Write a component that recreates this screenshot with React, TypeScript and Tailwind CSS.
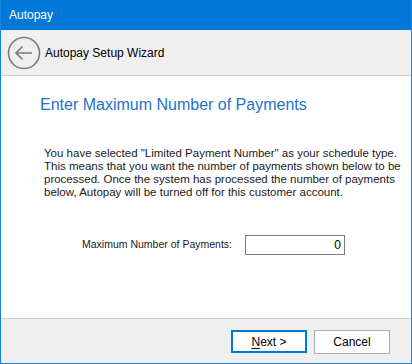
export default function App() {
    return (
        <div className="w-[412px] h-[364px] flex flex-col border-x border-b border-[#1883d7] bg-white font-['Liberation_Sans',sans-serif] text-black overflow-hidden">
            {/* TITLE BAR */}
            <div className="h-[30px] -mx-px bg-[#0078d7] flex items-center pl-[9px] text-[12px] text-white">
                Autopay
            </div>

            {/* WIZARD HEADER */}
            <div className="h-[46px] bg-[#efefef] border-b border-[#cccccc] flex items-center pl-[6px]">
                <svg width="34" height="34" viewBox="0 0 34 34" className="shrink-0">
                    <circle cx="17" cy="17" r="15.5" fill="none" stroke="#7a7a7a" strokeWidth="1.6" />
                    <path d="M9 17 H25 M15.5 10.5 L9 17 L15.5 23.5" fill="none" stroke="#7a7a7a" strokeWidth="1.6" />
                </svg>
                <span className="ml-[4px] text-[12px] leading-none">Autopay Setup Wizard</span>
            </div>

            {/* CONTENT */}
            <div className="flex-1 pl-[39px] pt-[18px]">
                <h2 className="text-[16px] leading-[22px] text-[#1e73c8]">
                    Enter Maximum Number of Payments
                </h2>

                <p className="mt-[31px] ml-[4px] whitespace-nowrap text-[11.5px] leading-[13px] text-[#1a1a1a]">
                    You have selected "Limited Payment Number" as your schedule type.<br />
                    This means that you want the number of payments shown below to be<br />
                    processed. Once the system has processed the number of payments<br />
                    below, Autopay will be turned off for this customer account.
                </p>

                <div className="mt-[36px] flex items-center">
                    <span className="w-[192px] text-right text-[10.5px] text-[#1a1a1a]">
                        Maximum Number of Payments:
                    </span>
                    <div className="ml-[13px] w-[100px] h-[20px] border border-[#7a7a7a] flex items-center justify-end pr-[3px] text-[12px]">
                        0
                    </div>
                </div>
            </div>

            {/* FOOTER */}
            <div className="h-[45px] bg-[#efefef] border-t border-[#cccccc] flex items-start justify-end pt-[11px] pr-[21px] gap-[7px]">
                <button className="w-[76px] h-[23px] border-2 border-[#0078d7] bg-white text-[12px] leading-none">
                    <span className="underline underline-offset-2">N</span>ext &gt;
                </button>
                <button className="w-[76px] h-[24px] border border-[#adadad] bg-[#fdfdfd] text-[12px] leading-none">
                    Cancel
                </button>
            </div>
        </div>
    );
}
